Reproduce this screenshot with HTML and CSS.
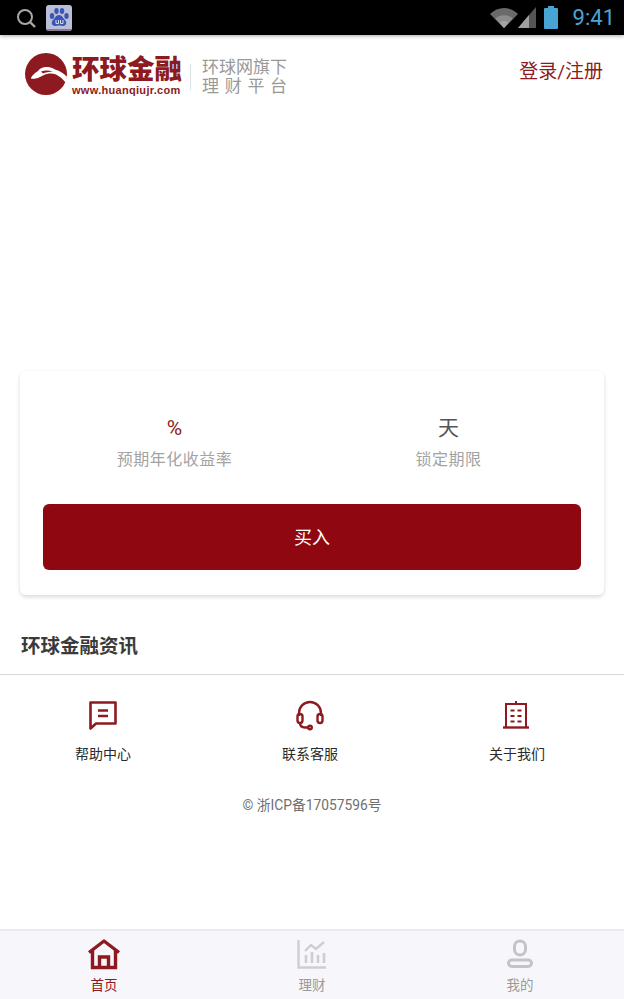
FILE: index.html
```html
<!DOCTYPE html>
<html lang="zh-CN">
<head>
    <meta charset="UTF-8">
    <meta name="viewport" content="width=device-width, initial-scale=1.0">
    <title>环球金融</title>
    <link rel="stylesheet" href="styles.css">
</head>
<body>
    <div id="app">
        <div class="statusbar">
            <div class="status-left">
                <svg class="ico-search" width="22" height="22" viewBox="0 0 22 22" fill="none" stroke="#a8a8a8" stroke-width="2"><circle cx="10" cy="10" r="7"/><path d="M15 15l5 5" stroke-width="2.4"/></svg>
                <svg class="ico-baidu" width="26" height="26" viewBox="0 0 26 26">
                    <rect width="26" height="26" rx="3" fill="#b9bfd6"/>
                    <path d="M1 24h24v1a1 1 0 0 1-1 1H2a1 1 0 0 1-1-1z" fill="#8a7a90"/>
                    <g fill="#3c55b4">
                        <ellipse cx="6" cy="11" rx="2.2" ry="3"/>
                        <ellipse cx="10.5" cy="6" rx="2.2" ry="3"/>
                        <ellipse cx="16" cy="6" rx="2.2" ry="3"/>
                        <ellipse cx="20.5" cy="11" rx="2.2" ry="3"/>
                        <path d="M13 10c3 0 4 3 6 5s1.500 6-2 6c-1.500 0-2.500-.5-4-.5s-2.500.5-4 .5c-3.500 0-4-4-2-6s3-5 6-5z"/>
                    </g>
                    <path d="M10 15v3.500h2.500V15M14.500 15v3.500H17V15" fill="none" stroke="#d5d9ea" stroke-width="1"/>
                </svg>
            </div>
            <div class="status-right">
                <svg class="ico-wifi" width="28" height="20" viewBox="0 0 28 20"><path d="M14 20L0 6c8-8 20-8 28 0z" fill="#6a6a6a"/><path d="M14 20L5 10.500c5-4.500 13-4.500 18 0z" fill="#8c8c8c"/><path d="M14 20L9.500 14.500c2.500-2 6.500-2 9 0z" fill="#a4a4a4"/></svg>
                <svg class="ico-signal" width="18" height="21" viewBox="0 0 18 21"><path d="M18 0v21H0z" fill="#555"/><path d="M11 8v13H0z" fill="#a0a0a0"/></svg>
                <svg class="ico-batt" width="16" height="23" viewBox="0 0 16 23"><path d="M5 0h6v2h3a1 1 0 0 1 1 1v19a1 1 0 0 1-1 1H2a1 1 0 0 1-1-1V3a1 1 0 0 1 1-1h3z" fill="#48a4d2"/></svg>
                <span class="clock">9:41</span>
            </div>
        </div>

        <div class="topbar">
            <div class="brand">
                <svg class="brand-mark" width="42" height="44" viewBox="0 0 42 44">
                    <circle cx="21" cy="22" r="21" fill="#8d1a20"/>
                    <path d="M6 26c1-3 4-5 7-7 2-3 5-4 8-4 3 0 6 .5 9 2.500 5 1.500 9 4 12 7.500l-1 6c-3-4-7-7-10-8.500-4-1.500-8-1.500-12 .5-2 1-4 2-6 3-2 .5-5 1-7 .5z" fill="#fff"/>
                    <path d="M16 19.500c4-1.500 8-1.500 12 0-4 .2-8 1-10 2z" fill="#8d1a20"/>
                </svg>
                <div class="brand-name">
                    <div class="brand-cn">环球金融</div>
                    <div class="brand-url">www.huanqiujr.com</div>
                </div>
                <div class="brand-sep"></div>
                <div class="brand-slogan">
                    <div>环球网旗下</div>
                    <div class="spread">理财平台</div>
                </div>
            </div>
            <a class="login">登录/注册</a>
        </div>

        <div class="banner"></div>

        <div class="card">
            <div class="stats">
                <div class="stat">
                    <div class="stat-val red">%</div>
                    <div class="stat-label">预期年化收益率</div>
                </div>
                <div class="stat">
                    <div class="stat-val">天</div>
                    <div class="stat-label">锁定期限</div>
                </div>
            </div>
            <button type="button" class="buy">买入</button>
        </div>

        <h2 class="news-title">环球金融资讯</h2>

        <div class="links">
            <div class="link">
                <svg width="32" height="32" viewBox="0 0 32 32" fill="none" stroke="#8d1a20" stroke-width="2.600"><path d="M3.500 3.500h25v21H9l-5.500 5z" stroke-linejoin="round"/><path d="M11 11.500h10M11 17h10"/></svg>
                <span>帮助中心</span>
            </div>
            <div class="link">
                <svg width="32" height="32" viewBox="0 0 32 32" fill="none" stroke="#8d1a20" stroke-width="2.400"><path d="M5 17v-3a11 11 0 0 1 22 0v3"/><rect x="3.500" y="15" width="5" height="9" rx="2.500"/><rect x="23.500" y="15" width="5" height="9" rx="2.500"/><path d="M6 24c0 3 2 4.500 5 4.500h3"/><circle cx="16" cy="28.500" r="1.800"/></svg>
                <span>联系客服</span>
            </div>
            <div class="link link-about">
                <svg width="32" height="32" viewBox="0 0 32 32" fill="none" stroke="#8d1a20" stroke-width="2"><path d="M6 28.500V5h20v23.500"/><path d="M3 28.500h26" stroke-width="2.400"/><path d="M16 2v3" /><path d="M10.500 11.500h4M17.500 11.500h4M10.500 17h4M17.500 17h4M10.500 22.500h4M17.500 22.500h4" stroke-width="1.800"/></svg>
                <span>关于我们</span>
            </div>
        </div>

        <div class="icp">© 浙ICP备17057596号</div>

        <div class="tabbar">
            <div class="tab active">
                <svg width="34" height="32" viewBox="0 0 34 32" fill="none" stroke="#8d1a20" stroke-width="3.400"><path d="M2 14.500L17 3l15 11.500" stroke-linejoin="round"/><path d="M5.500 12v17.500h23V12"/><path d="M12.500 29v-10h9v10"/></svg>
                <span>首页</span>
            </div>
            <div class="tab">
                <svg width="32" height="32" viewBox="0 0 32 32" fill="none" stroke="#cdcdd2" stroke-width="2.400"><path d="M2.500 2v27.500H30"/><path d="M9 13l6-6 5 4 8-7"/><path d="M10 17v8M16 14v11M22 17v8M28 15v10" stroke-width="2.600"/></svg>
                <span>理财</span>
            </div>
            <div class="tab">
                <svg width="32" height="32" viewBox="0 0 32 32" fill="none" stroke="#c4c4c8" stroke-width="3"><rect x="10.500" y="3" width="11" height="14" rx="5.500"/><rect x="4.500" y="22" width="23" height="6.500" rx="3.200"/></svg>
                <span>我的</span>
            </div>
        </div>
    </div>
</body>
</html>
```

FILE: styles.css
```css
* {
    box-sizing: border-box;
}

body {
    margin: 0;
    background-color: #fff;
    font-family: Roboto, "Noto Sans CJK SC", sans-serif;
}

#app {
    width: 624px;
    height: 999px;
    display: flex;
    flex-direction: column;
    overflow: hidden;
}

/* status bar */
.statusbar {
    height: 35px;
    flex: none;
    background-color: #000;
    box-shadow: 0 1px 4px rgba(0, 0, 0, 0.35);
    display: flex;
    justify-content: space-between;
    align-items: center;
    padding: 0 9px 0 15px;
    position: relative;
}

.status-left {
    display: flex;
    align-items: center;
    gap: 9px;
}

.status-right {
    display: flex;
    align-items: center;
}

.ico-batt {
    margin-left: 7px;
}

.clock {
    margin-left: 14px;
    color: #4aa6d6;
    font-size: 22px;
    line-height: 35px;
    font-family: Roboto, sans-serif;
}

/* header */
.topbar {
    height: 78px;
    flex: none;
    display: flex;
    justify-content: space-between;
    align-items: center;
    padding: 0 21px 0 25px;
}

.brand {
    display: flex;
    align-items: center;
}

.brand-name {
    margin-left: 5px;
    margin-top: 6px;
    width: 110px;
}

.brand-cn {
    font-size: 27.500px;
    line-height: 25px;
    font-weight: 900;
    color: #8d1a20;
    white-space: nowrap;
}

.brand-url {
    margin-top: 2px;
    font-size: 11px;
    line-height: 13px;
    font-weight: 700;
    color: #8d1a20;
    font-family: "Liberation Sans", sans-serif;
    letter-spacing: 0.3px;
    white-space: nowrap;
}

.brand-sep {
    width: 1px;
    height: 26px;
    margin: 6px 11px 0 8px;
    background-color: #dfe3e3;
}

.brand-slogan {
    margin-top: 6px;
    font-size: 17px;
    line-height: 19px;
    width: 85px;
    color: #999;
}

.spread {
    letter-spacing: 5.700px;
    white-space: nowrap;
}

.login {
    font-size: 19px;
    color: #8d1a20;
    margin-top: -9px;
}

.banner {
    height: 258px;
    flex: none;
}

/* product card */
.card {
    flex: none;
    height: 224px;
    margin: 0 20px;
    padding: 0 23px;
    border-radius: 6px;
    background-color: #fff;
    box-shadow: 0 2px 4px rgba(0, 0, 0, 0.15);
}

.stats {
    display: flex;
    padding-top: 43px;
    height: 133px;
}

.stat {
    text-align: center;
}

.stat:first-child {
    width: 263px;
}

.stat:last-child {
    flex: 1;
    margin-left: 10px;
}

.stat-val {
    font-size: 21px;
    line-height: 29px;
    color: #555;
}

.stat-val.red {
    color: #8d1a20;
}

.stat-label {
    margin-top: 5px;
    font-size: 16px;
    line-height: 24px;
    color: #a3a3a3;
    letter-spacing: 0.5px;
}

.buy {
    display: block;
    width: 100%;
    height: 66px;
    padding-bottom: 3px;
    border: none;
    border-radius: 6px;
    background-color: #8f0710;
    color: #fff;
    font-size: 18px;
    font-family: inherit;
}

/* news */
.news-title {
    margin: 0;
    height: 80px;
    padding: 37px 0 0 21px;
    flex: none;
    font-size: 19.500px;
    line-height: 30px;
    font-weight: 700;
    color: #3a3a3a;
    border-bottom: 1px solid #d8d8d8;
}

.links {
    flex: none;
    display: flex;
    justify-content: space-between;
    padding: 24px 79px 0 75px;
}

.link {
    display: flex;
    flex-direction: column;
    align-items: center;
    width: 56px;
    font-size: 14px;
    line-height: 20px;
    color: #2b2b2b;
}

.link span {
    margin-top: 13px;
    white-space: nowrap;
}

.link-about svg {
    margin-right: 3px;
}

.icp {
    flex: none;
    margin-top: 31px;
    text-align: center;
    font-size: 13.800px;
    line-height: 20px;
    color: #6f6f6f;
}

/* tab bar */
.tabbar {
    margin-top: auto;
    height: 70px;
    flex: none;
    display: flex;
    justify-content: space-between;
    padding: 7px 76px 0 76px;
    background-color: #f7f7fb;
    border-top: 2px solid #eaeaef;
}

.tab {
    display: flex;
    flex-direction: column;
    align-items: center;
    width: 56px;
    font-size: 13.500px;
    line-height: 20px;
    color: #9a9a9a;
}

.tab span {
    margin-top: 5px;
}

.tab.active {
    color: #8d1a20;
}
```
